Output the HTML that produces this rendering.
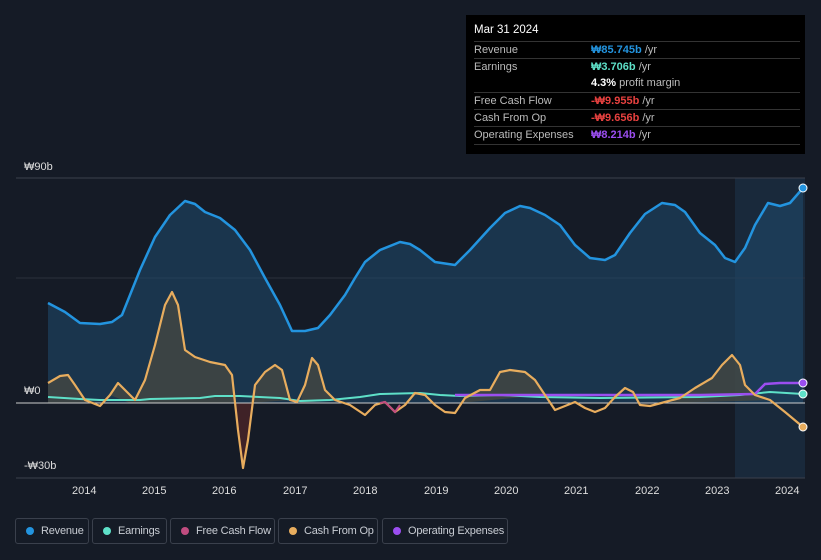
<!DOCTYPE html><html><head><style>
html,body{margin:0;width:821px;height:560px;background:#151b26;font-family:"Liberation Sans",sans-serif;overflow:hidden;position:relative}
.tip{position:absolute;left:466px;top:15px;width:339px;height:139px;background:#000;color:#bbb;font-size:11px}
.tip .h{position:absolute;left:8px;top:9px;color:#fff;font-size:11.5px}
.r{position:absolute;left:8px;width:326px;border-top:1px solid #333;height:17px;line-height:17px}
.r span.v{position:absolute;left:117px;font-weight:bold;white-space:nowrap}
.r span.v i{font-style:normal;font-weight:normal;color:#bbb}
.lg{position:absolute;top:518px;height:26px;border:1px solid #3a404c;border-radius:3px;color:#c8ccd3;font-size:11px;line-height:24px;box-sizing:border-box;white-space:nowrap}
.lg b{position:absolute;left:10px;top:8px;width:8px;height:8px;border-radius:50%}
.lg span{position:absolute;left:25px;white-space:nowrap;letter-spacing:-0.2px}
.ax{position:absolute;color:#ddd;font-size:11px}
</style></head><body>
<svg width="821" height="560" style="position:absolute;left:0;top:0">
<rect x="735" y="178" width="70" height="300" fill="#1b2f45" opacity="0.7"/>
<line x1="16" y1="178" x2="805" y2="178" stroke="#3a404c"/>
<line x1="16" y1="278" x2="805" y2="278" stroke="#2a303c"/>
<line x1="16" y1="478" x2="805" y2="478" stroke="#3a404c"/>
<path d="M48,303 L65,312 80,323 100,324 112,322 122,315 140,270 155,237 170,215 185,201 195,204 205,212 220,218 235,230 250,250 265,278 280,305 292,331 305,331 318,328 330,315 345,295 355,278 365,262 380,250 400,242 410,244 420,250 435,262 455,265 470,250 490,228 505,213 520,206 530,208 545,215 560,225 575,245 590,258 605,260 615,255 630,233 645,214 662,203 675,205 685,212 700,233 715,245 725,258 735,262 745,248 755,225 768,203 780,206 790,203 803,188 L803,403 48,403Z" fill="#1f4a6e" opacity="0.55"/>
<path d="M48,383 L60,376 68,375 75,385 85,400 100,403 L48,403Z M110,395 118,383 125,390 135,400 145,380 155,345 165,305 172,292 178,305 185,350 195,357 210,362 225,365 232,375 236,403 L130,403Z M255,385 265,372 275,365 282,370 290,400 L250,403Z M305,385 312,358 318,365 325,390 335,400 300,403Z M465,398 480,390 490,390 500,372 510,370 525,372 535,380 545,395 L460,403Z M680,398 695,388 712,378 722,365 732,355 740,365 745,385 755,395 770,400 L670,403Z" fill="#4a4a40" opacity="0.7"/>
<path d="M236,403 238,430 243,468 248,440 252,403Z" fill="#4a2428" opacity="0.8"/>
<path d="M48,303 L65,312 80,323 100,324 112,322 122,315 140,270 155,237 170,215 185,201 195,204 205,212 220,218 235,230 250,250 265,278 280,305 292,331 305,331 318,328 330,315 345,295 355,278 365,262 380,250 400,242 410,244 420,250 435,262 455,265 470,250 490,228 505,213 520,206 530,208 545,215 560,225 575,245 590,258 605,260 615,255 630,233 645,214 662,203 675,205 685,212 700,233 715,245 725,258 735,262 745,248 755,225 768,203 780,206 790,203 803,188" fill="none" stroke="#2394df" stroke-width="2.5" stroke-linejoin="round"/>
<line x1="16" y1="403" x2="805" y2="403" stroke="#ccc" stroke-width="1"/>
<path d="M48,397 L80,399 100,400 140,400 150,399 200,398 215,396 240,396 280,398 300,401 330,400 360,397 380,394 420,393 440,395 460,396 500,395 540,397 600,398 700,397 740,395 770,392 803,394" fill="none" stroke="#5ee0c8" stroke-width="2"/>
<path d="M455,395 L560,395 700,395 755,394 765,384 780,383 803,383" fill="none" stroke="#9b4ef0" stroke-width="2.5"/>
<path d="M48,383 L60,376 68,375 75,385 85,400 100,406 110,395 118,383 125,390 135,400 145,380 155,345 165,305 172,292 178,305 185,350 195,357 210,362 225,365 232,375 238,430 243,468 248,440 255,385 265,372 275,365 282,370 290,400 297,402 305,385 312,358 318,365 325,390 335,400 350,405 365,415 375,405 385,402 395,412 405,405 415,393 425,395 435,405 445,412 455,413 465,398 480,390 490,390 500,372 510,370 525,372 535,380 545,395 555,410 565,406 575,402 585,408 595,412 605,408 615,397 625,388 633,392 640,405 650,406 665,402 680,398 695,388 712,378 722,365 732,355 740,365 745,385 755,395 770,400 785,412 803,427" fill="none" stroke="#e8ad5e" stroke-width="2.2" stroke-linejoin="round"/>
<path d="M380,403 385,402 395,412 400,405" fill="none" stroke="#c04c80" stroke-width="2"/>
<circle cx="803" cy="188" r="4" fill="#2394df" stroke="#fff" stroke-width="1"/>
<circle cx="803" cy="394" r="4" fill="#5ee0c8" stroke="#fff" stroke-width="1"/>
<circle cx="803" cy="383" r="4" fill="#9b4ef0" stroke="#fff" stroke-width="1"/>
<circle cx="803" cy="427" r="4" fill="#e8ad5e" stroke="#fff" stroke-width="1"/>
</svg>
<div class="ax" style="left:24px;top:161px">₩90b</div>
<div class="ax" style="left:24px;top:385px">₩0</div>
<div class="ax" style="left:24px;top:460px">-₩30b</div>
<div class="ax" style="left:72px;top:485px">2014</div><div class="ax" style="left:142px;top:485px">2015</div><div class="ax" style="left:212px;top:485px">2016</div><div class="ax" style="left:283px;top:485px">2017</div><div class="ax" style="left:353px;top:485px">2018</div><div class="ax" style="left:424px;top:485px">2019</div><div class="ax" style="left:494px;top:485px">2020</div><div class="ax" style="left:564px;top:485px">2021</div><div class="ax" style="left:635px;top:485px">2022</div><div class="ax" style="left:705px;top:485px">2023</div><div class="ax" style="left:775px;top:485px">2024</div>
<div class="tip"><div class="h">Mar 31 2024</div>
<div class="r" style="top:26px">Revenue<span class="v" style="color:#2394df">₩85.745b <i>/yr</i></span></div>
<div class="r" style="top:43px">Earnings<span class="v" style="color:#5ee0c8">₩3.706b <i>/yr</i></span></div>
<div class="r" style="top:60px;border:0"><span class="v" style="color:#fff">4.3% <i>profit margin</i></span></div>
<div class="r" style="top:77px">Free Cash Flow<span class="v" style="color:#e8413f">-₩9.955b <i>/yr</i></span></div>
<div class="r" style="top:94px">Cash From Op<span class="v" style="color:#e8413f">-₩9.656b <i>/yr</i></span></div>
<div class="r" style="top:111px;border-bottom:1px solid #333">Operating Expenses<span class="v" style="color:#9b4ef0">₩8.214b <i>/yr</i></span></div>
</div>
<div class="lg" style="left:15px;width:74px"><b style="background:#2394df"></b><span>Revenue</span></div>
<div class="lg" style="left:92px;width:75px"><b style="background:#5ee0c8"></b><span>Earnings</span></div>
<div class="lg" style="left:170px;width:105px"><b style="background:#c04c80"></b><span>Free Cash Flow</span></div>
<div class="lg" style="left:278px;width:100px"><b style="background:#e8ad5e"></b><span>Cash From Op</span></div>
<div class="lg" style="left:382px;width:126px"><b style="background:#9b4ef0"></b><span>Operating Expenses</span></div>
</body></html>
